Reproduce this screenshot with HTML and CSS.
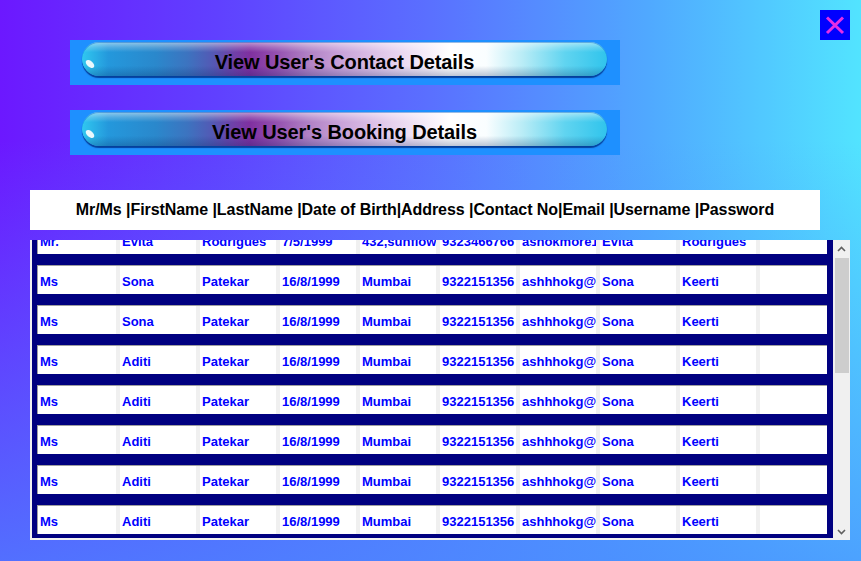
FILE: index.html
```html
<!DOCTYPE html>
<html>
<head>
<meta charset="utf-8">
<link rel="stylesheet" href="styles.css">
</head>
<body>
<div class="page">
  <div class="topbar">
    <button class="close" aria-label="Close">
      <svg width="30" height="30" viewBox="0 0 30 30"><path d="M7 7.5 L23 23 M23 7.5 L7 23" stroke="#e52ee5" stroke-width="3" fill="none"/></svg>
    </button>
  </div>
  <div class="actions">
    <div class="btn"><div class="pill">View User's Contact Details</div></div>
    <div class="btn"><div class="pill">View User's Booking Details</div></div>
  </div>
  <div class="header">Mr/Ms |FirstName |LastName |Date of Birth|Address |Contact No|Email |Username |Password</div>
  <div class="grid-wrap">
    <div class="list">
      <div class="rows">
        <div class="row"><div class="cell">Mr.</div><div class="cell">Evita</div><div class="cell">Rodrigues</div><div class="cell">7/5/1999</div><div class="cell">432,sunflower</div><div class="cell">9323466766</div><div class="cell">ashokmore1@gmail.com</div><div class="cell">Evita</div><div class="cell">Rodrigues</div><div class="cell"></div></div>
        <div class="row"><div class="cell">Ms</div><div class="cell">Sona</div><div class="cell">Patekar</div><div class="cell">16/8/1999</div><div class="cell">Mumbai</div><div class="cell">9322151356</div><div class="cell">ashhhokg@gmail.com</div><div class="cell">Sona</div><div class="cell">Keerti</div><div class="cell"></div></div>
        <div class="row"><div class="cell">Ms</div><div class="cell">Sona</div><div class="cell">Patekar</div><div class="cell">16/8/1999</div><div class="cell">Mumbai</div><div class="cell">9322151356</div><div class="cell">ashhhokg@gmail.com</div><div class="cell">Sona</div><div class="cell">Keerti</div><div class="cell"></div></div>
        <div class="row"><div class="cell">Ms</div><div class="cell">Aditi</div><div class="cell">Patekar</div><div class="cell">16/8/1999</div><div class="cell">Mumbai</div><div class="cell">9322151356</div><div class="cell">ashhhokg@gmail.com</div><div class="cell">Sona</div><div class="cell">Keerti</div><div class="cell"></div></div>
        <div class="row"><div class="cell">Ms</div><div class="cell">Aditi</div><div class="cell">Patekar</div><div class="cell">16/8/1999</div><div class="cell">Mumbai</div><div class="cell">9322151356</div><div class="cell">ashhhokg@gmail.com</div><div class="cell">Sona</div><div class="cell">Keerti</div><div class="cell"></div></div>
        <div class="row"><div class="cell">Ms</div><div class="cell">Aditi</div><div class="cell">Patekar</div><div class="cell">16/8/1999</div><div class="cell">Mumbai</div><div class="cell">9322151356</div><div class="cell">ashhhokg@gmail.com</div><div class="cell">Sona</div><div class="cell">Keerti</div><div class="cell"></div></div>
        <div class="row"><div class="cell">Ms</div><div class="cell">Aditi</div><div class="cell">Patekar</div><div class="cell">16/8/1999</div><div class="cell">Mumbai</div><div class="cell">9322151356</div><div class="cell">ashhhokg@gmail.com</div><div class="cell">Sona</div><div class="cell">Keerti</div><div class="cell"></div></div>
        <div class="row"><div class="cell">Ms</div><div class="cell">Aditi</div><div class="cell">Patekar</div><div class="cell">16/8/1999</div><div class="cell">Mumbai</div><div class="cell">9322151356</div><div class="cell">ashhhokg@gmail.com</div><div class="cell">Sona</div><div class="cell">Keerti</div><div class="cell"></div></div>
      </div>
    </div>
    <div class="scrollbar">
      <div class="arrow"><svg width="9" height="6" viewBox="0 0 9 6"><path d="M1 5 L4.5 1.5 L8 5" stroke="#606060" stroke-width="1.6" fill="none"/></svg></div>
      <div class="thumb"></div>
      <div class="track"></div>
      <div class="arrow"><svg width="9" height="6" viewBox="0 0 9 6"><path d="M1 1 L4.5 4.5 L8 1" stroke="#606060" stroke-width="1.6" fill="none"/></svg></div>
    </div>
  </div>
</div>
</body>
</html>
```
FILE: styles.css
```css
html, body {
  margin: 0;
  padding: 0;
}
body {
  width: 861px;
  height: 561px;
  overflow: hidden;
  font-family: "Liberation Sans", Arial, sans-serif;
  background:
    linear-gradient(to top, rgba(74, 140, 255, 0.75) 0%, rgba(74, 140, 255, 0) 75%),
    linear-gradient(to right, #6c18ff 0%, #6040ff 25%, #5a70ff 50%, #50a8ff 75%, #52e4ff 100%);
}
.page {
  display: flex;
  flex-direction: column;
}
.topbar {
  display: flex;
  justify-content: flex-end;
  padding: 10px 11px 0 0;
  height: 30px;
}
.close {
  width: 30px;
  height: 30px;
  background: #0000ff;
  border: 0;
  padding: 0;
  display: flex;
  align-items: center;
  justify-content: center;
}
.actions {
  display: flex;
  flex-direction: column;
  gap: 25px;
  margin-left: 70px;
}
.btn {
  width: 550px;
  height: 45px;
  box-sizing: border-box;
  background: #1e90ff;
  padding: 2px 13px 0 12px;
}
.pill {
  position: relative;
  height: 34px;
  border-radius: 17px;
  display: flex;
  align-items: center;
  justify-content: center;
  font-weight: bold;
  font-size: 20px;
  letter-spacing: -0.1px;
  color: #000;
  padding-top: 6px;
  box-sizing: border-box;
  background:
    linear-gradient(to bottom, rgba(255,255,255,0.5) 0%, rgba(255,255,255,0.2) 16%, rgba(255,255,255,0) 30%, rgba(0,0,0,0) 70%, rgba(0,30,90,0.25) 100%),
    linear-gradient(to right, #30c8f0 0%, #2498dc 5%, #2a88cc 14%, #3c74c0 20%, #5458b4 25%, #7040a8 29%, #8030a0 32%, #9450b0 37%, #b080c4 43%, #c8a0d8 49%, #e6d0ee 59%, #ffffff 70%, #fafeff 77%, #b8ecf6 84%, #60d4f0 92%, #30c4ec 100%);
  box-shadow: 0 2px 1px rgba(0, 50, 140, 0.85), inset 0 1px 0 rgba(0, 90, 190, 0.4);
}
.pill::before {
  content: "";
  position: absolute;
  left: 3px;
  top: 19px;
  width: 10px;
  height: 6px;
  border-radius: 50%;
  background: #ffffff;
  opacity: 0.9;
  transform: rotate(40deg);
}
.header {
  margin: 35px 0 10px 30px;
  width: 790px;
  height: 40px;
  background: #fff;
  display: flex;
  align-items: center;
  justify-content: center;
  font-weight: bold;
  font-size: 16px;
  letter-spacing: -0.07px;
  color: #000;
}
.grid-wrap {
  margin-left: 30px;
  width: 820px;
  height: 300px;
  display: flex;
}
.list {
  flex: 1;
  background: #000080;
  border-left: 2px solid #f0f0f0;
  border-bottom: 2px solid #f0f0f0;
  overflow: hidden;
  padding: 0 6px 0 5px;
}
.rows {
  margin-top: -15px;
  display: flex;
  flex-direction: column;
  gap: 11px;
}
.row {
  display: grid;
  grid-template-columns: 78px repeat(8, 76px) 1fr;
  column-gap: 4px;
  height: 29px;
  box-sizing: border-box;
  background: #f0f0f0;
  border-top: 1px solid #a0a0a0;
  border-left: 1px solid #a0a0a0;
}
.cell {
  background: #fff;
  overflow: hidden;
  text-overflow: clip;
  white-space: nowrap;
  display: flex;
  align-items: center;
  box-sizing: border-box;
  padding: 2px 0 0 2px;
  font-weight: bold;
  font-size: 13px;
  color: #0000ff;
}
.scrollbar {
  width: 17px;
  background: #f0f0f0;
  display: flex;
  flex-direction: column;
}
.arrow {
  height: 17px;
  display: flex;
  align-items: center;
  justify-content: center;
}
.thumb {
  height: 115px;
  margin: 1px 1px 0 2px;
  background: #cdcdcd;
}
.track {
  flex: 1;
}
```
